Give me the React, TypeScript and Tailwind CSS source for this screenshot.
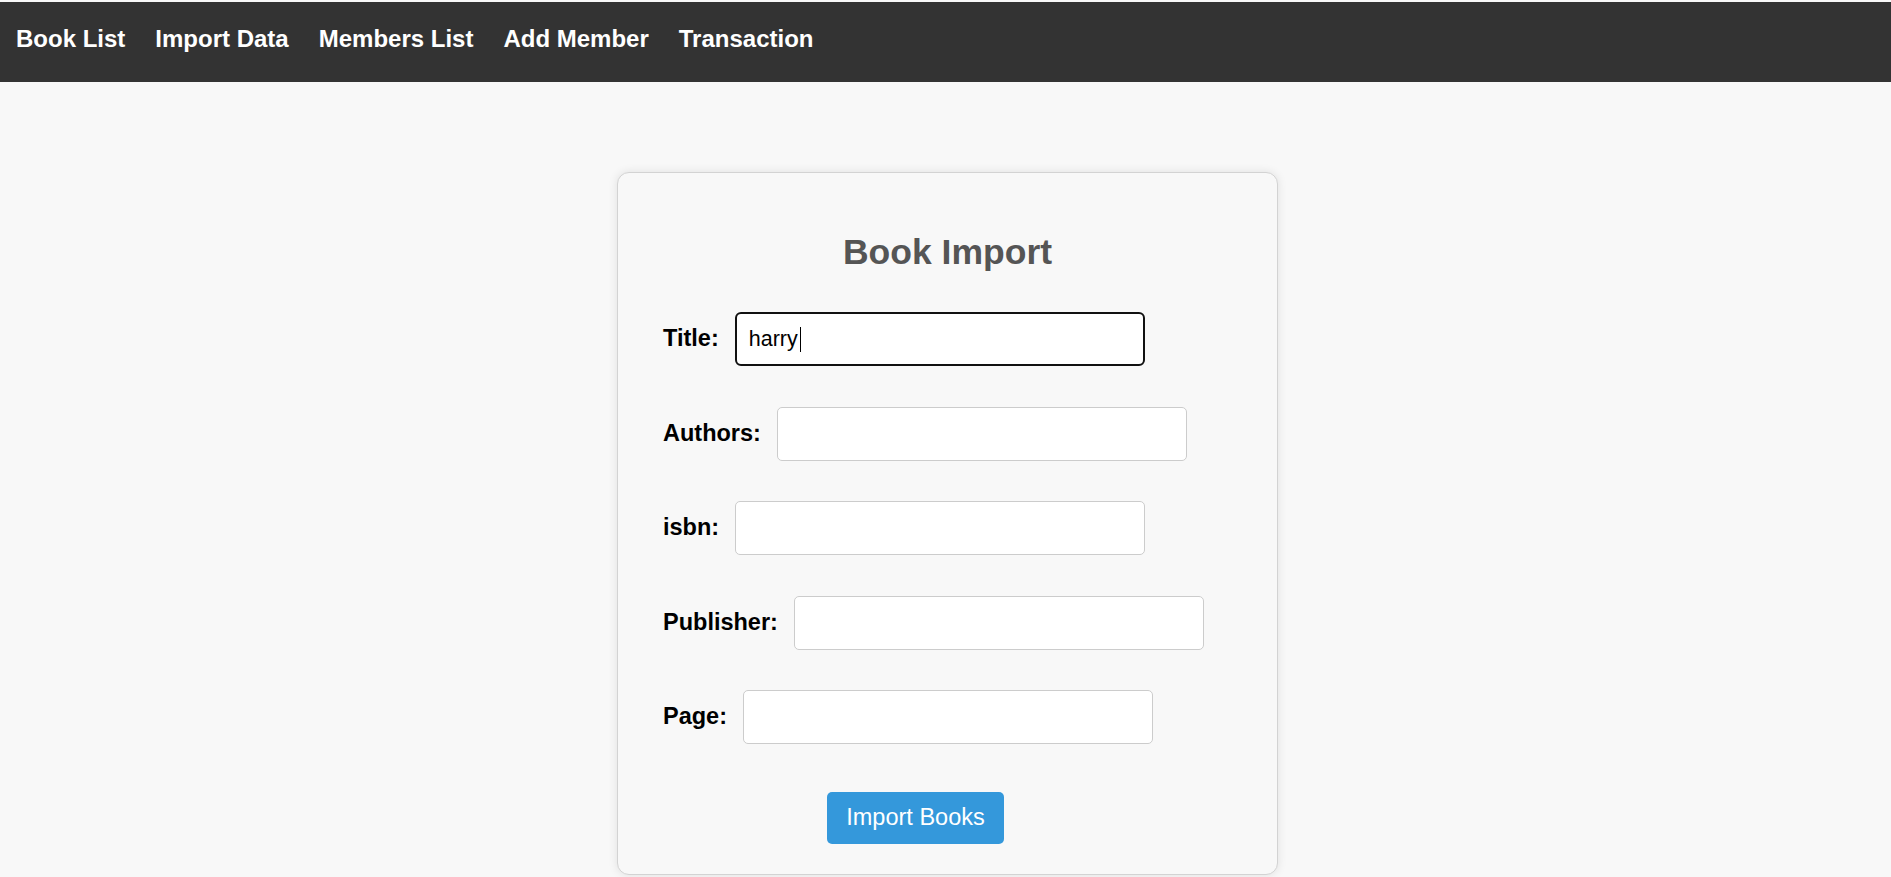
export default function App() {
  const rows = [
    { label: "Title:", value: "harry", focused: true },
    { label: "Authors:", value: "" },
    { label: "isbn:", value: "" },
    { label: "Publisher:", value: "" },
    { label: "Page:", value: "" },
  ];

  return (
    <div className="min-h-screen bg-[#f8f8f8] pt-[2px] font-['Liberation_Sans',Arial,sans-serif]">
      <nav className="h-[80px] bg-[#333333]">
        <ul className="flex gap-[30px] pl-4 pt-[23px]">
          {["Book List", "Import Data", "Members List", "Add Member", "Transaction"].map((item) => (
            <li key={item}>
              <a href="#" className="text-[24px] font-bold leading-[28px] text-white">
                {item}
              </a>
            </li>
          ))}
        </ul>
      </nav>

      <div className="mx-auto mt-[90px] box-border w-[661px] translate-x-[2px] rounded-xl border border-[#d3d3d3] bg-[#f8f8f8] px-[30px] pb-[30px] pt-[59px] shadow-[0_0_10px_rgba(0,0,0,0.1)]">
        <h2 className="text-center text-[35.5px] font-bold leading-[40px] text-[#555555]">Book Import</h2>

        <form className="mt-[40px] flex flex-col gap-[40.5px] pl-[15px]">
          {rows.map((row) => (
            <div key={row.label} className="flex h-[54px] items-center gap-4">
              <label className="text-[23.5px] font-bold text-black">{row.label}</label>
              {row.focused ? (
                <div className="box-border flex h-[54px] w-[410px] items-center rounded-md border-[2.5px] border-[#111111] bg-white pl-[12px] text-[21.5px] text-black">
                  {row.value}
                  <span className="ml-[2px] inline-block h-[25px] w-[1.5px] bg-black" />
                </div>
              ) : (
                <input
                  type="text"
                  className="box-border h-[54px] w-[410px] rounded-[5px] border border-[#cccccc] bg-white px-3 text-[21.5px] outline-none"
                />
              )}
            </div>
          ))}

          <div className="mt-[7.5px] pl-[164px]">
            <button
              type="button"
              className="h-[52px] w-[177px] rounded-[5px] bg-[#3498db] text-[23.5px] text-white"
            >
              Import Books
            </button>
          </div>
        </form>
      </div>
    </div>
  );
}
